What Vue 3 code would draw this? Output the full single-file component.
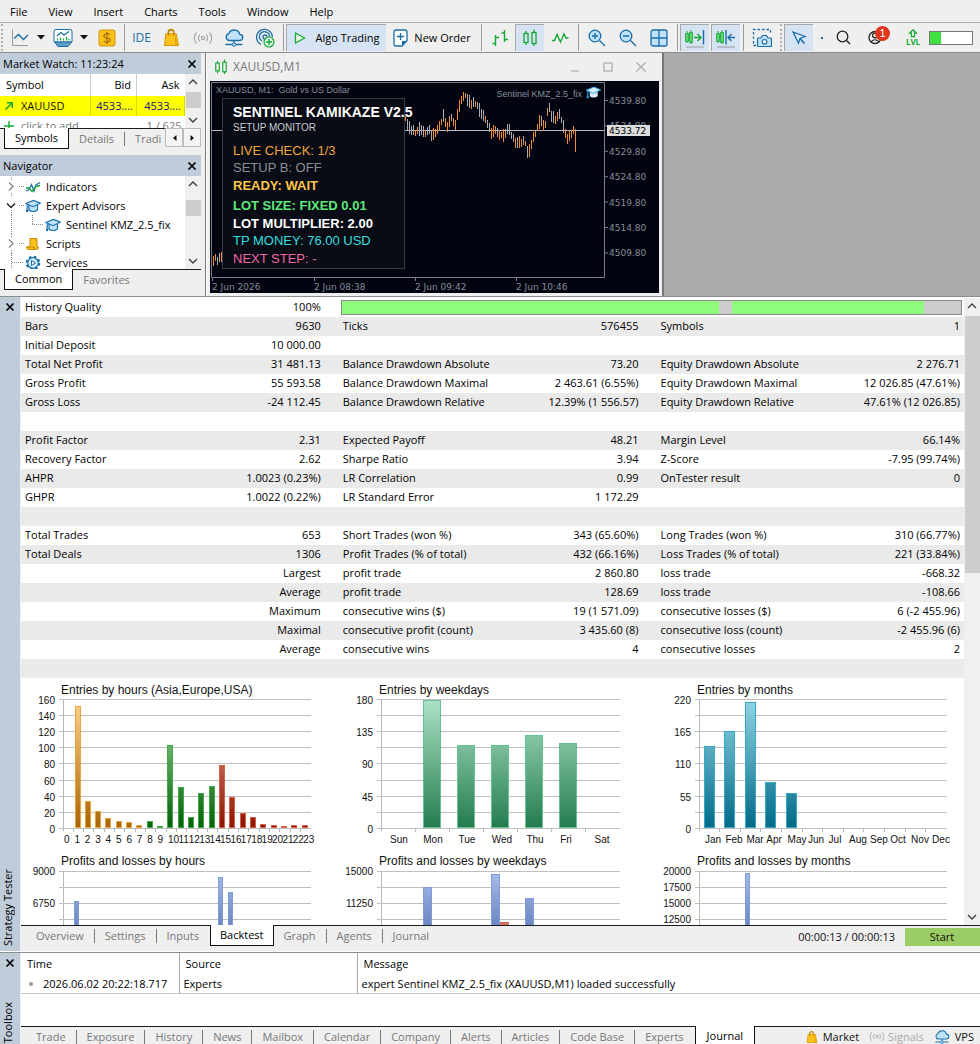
<script setup>
const menus = ['File', 'View', 'Insert', 'Charts', 'Tools', 'Window', 'Help']

const prices = ['4539.80', '4534.80', '4529.80', '4524.80', '4519.80', '4514.80', '4509.80']
const times = [
  { x: 2, t: '2 Jun 2026' },
  { x: 104, t: '2 Jun 08:38' },
  { x: 205, t: '2 Jun 09:42' },
  { x: 306, t: '2 Jun 10:46' }
]
const symbolTitle = 'XAUUSD, M1:\u00a0 Gold vs US Dollar'

const monitor = [
  { t: 'LIVE CHECK: 1/3', y: 74, c: 'amber' },
  { t: 'SETUP B: OFF', y: 91, c: 'dim' },
  { t: 'READY: WAIT', y: 109, c: 'gold strong' },
  { t: 'LOT SIZE: FIXED 0.01', y: 129, c: 'lime strong' },
  { t: 'LOT MULTIPLIER: 2.00', y: 147, c: 'white strong' },
  { t: 'TP MONEY: 76.00 USD', y: 164, c: 'cyan' },
  { t: 'NEXT STEP: -', y: 182, c: 'pink' }
]

const track = [
  [195, 38], [199, 47], [206, 53], [210, 46], [214, 53], [218, 50], [222, 54], [230, 46],
  [233, 34], [237, 46], [241, 37], [244, 46], [247, 33], [251, 19], [255, 15], [260, 23],
  [264, 22], [270, 30], [275, 38], [280, 52], [285, 48], [289, 56], [293, 54], [298, 47],
  [302, 58], [310, 63], [314, 60], [318, 73], [323, 57], [328, 46], [330, 36], [334, 48],
  [338, 27], [341, 34], [346, 39], [348, 33], [354, 47], [357, 58], [361, 54], [364, 50]
]
function level(x) {
  for (let i = 1; i < track.length; i++) {
    if (x <= track[i][0]) {
      const [x0, y0] = track[i - 1]
      const [x1, y1] = track[i]
      return y0 + ((y1 - y0) * (x - x0)) / (x1 - x0)
    }
  }
  return track[track.length - 1][1]
}
const candles = []
for (let x = 195, i = 0; x <= 363; x += 2, i++) {
  const y = level(x)
  const up = 3 + ((i * 7) % 5)
  const down = 2 + ((i * 11) % 6)
  const rising = level(x + 2) < y
  candles.push({ x, y: Math.round(y - up), h: up + down, c: rising || i % 5 === 0 ? 'up' : 'down' })
}
candles.push({ x: 365, y: 48, h: 23, c: 'up' })
candles.push({ x: 3, y: 175, h: 10, c: 'up' }, { x: 5, y: 173, h: 7, c: 'up' }, { x: 7, y: 176, h: 8, c: 'down' }, { x: 9, y: 172, h: 9, c: 'down' }, { x: 11, y: 171, h: 10, c: 'up' })

const rows = [
  ['Bars', '9630', 'Ticks', '576455', 'Symbols', '1'],
  ['Initial Deposit', '10 000.00', '', '', '', ''],
  ['Total Net Profit', '31 481.13', 'Balance Drawdown Absolute', '73.20', 'Equity Drawdown Absolute', '2 276.71'],
  ['Gross Profit', '55 593.58', 'Balance Drawdown Maximal', '2 463.61 (6.55%)', 'Equity Drawdown Maximal', '12 026.85 (47.61%)'],
  ['Gross Loss', '-24 112.45', 'Balance Drawdown Relative', '12.39% (1 556.57)', 'Equity Drawdown Relative', '47.61% (12 026.85)'],
  ['', '', '', '', '', ''],
  ['Profit Factor', '2.31', 'Expected Payoff', '48.21', 'Margin Level', '66.14%'],
  ['Recovery Factor', '2.62', 'Sharpe Ratio', '3.94', 'Z-Score', '-7.95 (99.74%)'],
  ['AHPR', '1.0023 (0.23%)', 'LR Correlation', '0.99', 'OnTester result', '0'],
  ['GHPR', '1.0022 (0.22%)', 'LR Standard Error', '1 172.29', '', ''],
  ['', '', '', '', '', ''],
  ['Total Trades', '653', 'Short Trades (won %)', '343 (65.60%)', 'Long Trades (won %)', '310 (66.77%)'],
  ['Total Deals', '1306', 'Profit Trades (% of total)', '432 (66.16%)', 'Loss Trades (% of total)', '221 (33.84%)'],
  ['', 'Largest', 'profit trade', '2 860.80', 'loss trade', '-668.32'],
  ['', 'Average', 'profit trade', '128.69', 'loss trade', '-108.66'],
  ['', 'Maximum', 'consecutive wins ($)', '19 (1 571.09)', 'consecutive losses ($)', '6 (-2 455.96)'],
  ['', 'Maximal', 'consecutive profit (count)', '3 435.60 (8)', 'consecutive loss (count)', '-2 455.96 (6)'],
  ['', 'Average', 'consecutive wins', '4', 'consecutive losses', '2'],
  ['', '', '', '', '', '']
]

const hours = [0, 151, 33, 20, 11, 7, 6, 3, 7, 1, 102, 50, 13, 42, 51, 77, 37, 17, 13, 4, 3, 1, 2, 2]
const charts = [
  {
    title: 'Entries by hours (Asia,Europe,USA)',
    title2: 'Profits and losses by hours',
    axis: 42, right: 290, step: 10.33, n: 24,
    y: [160, 140, 120, 100, 80, 60, 40, 20, 0],
    bars: hours.map((v, h) => ({ x: 54 + (h - 1) * 10.33, w: 5, h: (v * 128) / 160, g: h < 8 ? 'orange' : h < 15 ? 'green' : 'red' })).filter(b => b.h > 0),
    labels: hours.map((v, h) => ({ x: 43 + h * 10.4, t: h })),
    anchor: 'start',
    y2: ['9000', '', '6750', ''],
    bars2: [{ x: 53, y: 223, w: 4, g: 'blue' }, { x: 197, y: 199, w: 4, g: 'blue' }, { x: 207, y: 214, w: 4, g: 'blue' }]
  },
  {
    title: 'Entries by weekdays',
    title2: 'Profits and losses by weekdays',
    axis: 42, right: 281, step: 34.1, n: 7,
    y: [180, '', 135, '', 90, '', 45, '', 0],
    bars: [178, 116, 115, 129, 118].map((v, i) => ({ x: 84 + i * 34.1, w: 17, h: (v * 128) / 180, g: 'mint' })),
    labels: [['Sun', 60], ['Mon', 94], ['Tue', 128], ['Wed', 163], ['Thu', 196], ['Fri', 227], ['Sat', 263]].map(([t, x]) => ({ t, x })),
    anchor: 'middle',
    y2: ['15000', '', '11250', ''],
    bars2: [{ x: 84, y: 209, w: 8, g: 'blue' }, { x: 152, y: 196, w: 8, g: 'blue' }, { x: 161, y: 244, w: 8, g: 'brick' }, { x: 186, y: 220, w: 8, g: 'blue' }]
  },
  {
    title: 'Entries by months',
    title2: 'Profits and losses by months',
    axis: 42, right: 290, step: 20.6, n: 12,
    y: [220, '', 165, '', 110, '', 55, '', 0],
    bars: [140, 165, 215, 77, 59].map((v, i) => ({ x: 47 + i * 20.6, w: 10, h: (v * 128) / 220, g: 'teal' })),
    labels: [['Jan', 56], ['Feb', 77], ['Mar', 98], ['Apr', 117], ['May', 140], ['Jun', 159], ['Jul', 178], ['Aug', 201], ['Sep', 222], ['Oct', 241], ['Nov', 263], ['Dec', 284]].map(([t, x]) => ({ t, x })),
    anchor: 'middle',
    y2: ['20000', '17500', '15000', '12500'],
    bars2: [{ x: 88, y: 195, w: 4, g: 'blue' }]
  }
]

const gradients = [
  ['orange', '#ffd28e', '#a86400', 22, 150],
  ['green', '#9edc9e', '#046008', 22, 150],
  ['red', '#f0a898', '#8a1400', 22, 150],
  ['mint', '#abe2c6', '#247c4e', 22, 150],
  ['teal', '#93d3e3', '#006a88', 22, 150],
  ['blue', '#a9bdea', '#5d79b8', 193, 260],
  ['brick', '#e08070', '#c05040', 240, 260]
]
const edge = { orange: '#e8a640', green: '#3fa848', red: '#d8604a', mint: '#66c494', teal: '#35a8c4', blue: '#7f9bdc', brick: '#d06a58' }

const testerTabs = ['Overview', 'Settings', 'Inputs', 'Backtest', 'Graph', 'Agents', 'Journal']
const toolboxTabs = ['Trade', 'Exposure', 'History', 'News', 'Mailbox', 'Calendar', 'Company', 'Alerts', 'Articles', 'Code Base', 'Experts', 'Journal']
</script>

<template>
  <div class="terminal">
    <svg class="defs" aria-hidden="true">
      <symbol id="i-bag" viewBox="0 0 18 20">
        <path d="M5.5 8V4.5A3 3 0 0 1 11.500 4.500V8" fill="none" stroke="#c88a00" stroke-width="1.300" />
        <path d="M3 6h11l2.500 12.500h-15z" fill="#fcc21b" stroke="#d49400" />
        <path d="M13 6.500l2.500 12h-3z" fill="#e8a400" />
        <path d="M6 8.500V5a2.700 2.700 0 0 1 5.400 0v3.500" fill="none" stroke="#b87a00" />
      </symbol>
      <symbol id="i-cloud" viewBox="0 0 20 18">
        <path d="M5 11.500h10.500a3 3 0 0 0 .3-6.200 5.800 5.800 0 0 0-11-.6A3.500 3.500 0 0 0 5 11.500z" fill="#bfe3fa" stroke="#1a6ea8" stroke-width="1.300" />
        <path d="M10 11.500v3M1.500 15.500h6.500M12 15.500h6.500" stroke="#1a6ea8" stroke-width="1.300" />
        <circle cx="10" cy="15.500" r="1.800" fill="#bfe3fa" stroke="#1a6ea8" />
      </symbol>
      <symbol id="i-signal" viewBox="0 0 20 14">
        <g fill="none" stroke="#a8a8a8" stroke-width="1.200">
          <circle cx="10" cy="7" r="1.600" />
          <path d="M6.800 3.800a4.500 4.500 0 0 0 0 6.400M13.200 3.800a4.500 4.500 0 0 1 0 6.400M3.500 1.500a8 8 0 0 0 0 11M16.500 1.500a8 8 0 0 1 0 11" />
        </g>
      </symbol>
      <symbol id="i-cap" viewBox="0 0 16 14">
        <path d="M4 6v5c2 2 6 2 8.500 0V6" fill="#bfe3fa" stroke="#1a6ea8" stroke-width="1.200" />
        <path d="M.8 4.500L8.500 1.500l6.800 2.700-7.300 3.500z" fill="#bfe3fa" stroke="#1a6ea8" stroke-width="1.200" />
        <path d="M2.200 5.500v6.500" stroke="#1a6ea8" stroke-width="1.200" />
        <circle cx="2.200" cy="12" r="1.200" fill="#1a6ea8" />
      </symbol>
      <symbol id="i-close" viewBox="0 0 10 10">
        <path d="M1.500 1.500l7 7M8.500 1.500l-7 7" stroke="currentColor" stroke-width="1.700" />
      </symbol>
      <symbol id="i-up" viewBox="0 0 10 6"><path d="M1 5l4-4 4 4" fill="none" stroke="#404040" stroke-width="1.400" /></symbol>
      <symbol id="i-down" viewBox="0 0 10 6"><path d="M1 1l4 4 4-4" fill="none" stroke="#404040" stroke-width="1.400" /></symbol>
      <symbol id="i-candle" viewBox="0 0 16 18">
        <g fill="none" stroke="#14a832" stroke-width="1.300">
          <path d="M4 2v2.500M4 13.500V16M12 .5v3M12 14.500V17" /><rect x="2" y="4.500" width="4" height="9" /><rect x="10" y="3.500" width="4" height="11" />
        </g>
      </symbol>
    </svg>

    <nav class="menubar" aria-label="Main menu">
      <button v-for="m in menus" :key="m" type="button">{{ m }}</button>
    </nav>

    <div class="toolbar">
      <i class="grip"></i>
      <button class="drop" type="button" aria-label="Chart type">
        <svg width="20" height="20"><path d="M2.500 1.500V17.500H18" fill="none" stroke="#9a9a9a" /><path d="M4 10.500l4.500-4 5 5L18 7" fill="none" stroke="#1a6ea8" stroke-width="1.400" /></svg>
        <svg width="8" height="5"><path d="M0 0h8L4 4.500z" fill="#111" /></svg>
      </button>
      <button class="drop" type="button" aria-label="Indicators">
        <svg width="20" height="20"><path d="M3 1.500h14q2 0 2 2v10.500H1V3.500q0-2 2-2z" fill="#fff" stroke="#1a6ea8" /><path d="M1.500 14h17l-3.500 4.500H5z" fill="#5f9fc4" stroke="#1a6ea8" /><path d="M4 8l4-3.500 3 2.500 5-3.500" fill="none" stroke="#1a6ea8" stroke-width="1.200" /><path d="M4.500 12.500v-2M7.500 12.500v-3M10.500 12.500v-2M13.500 12.500v-3.500M16 12.500v-2" stroke="#14a832" stroke-width="1.200" /></svg>
        <svg width="8" height="5"><path d="M0 0h8L4 4.500z" fill="#111" /></svg>
      </button>
      <button class="coin" type="button" aria-label="Quotes">
        <svg width="18" height="18"><rect x="1" y="1" width="16" height="16" rx="2" fill="#fcc21b" stroke="#d49400" /><path d="M12 6q-1-1.500-3-1.500T6 6.500t3 2.500 3 2.500T9 13.500 5.800 12M9 3v12" fill="none" stroke="#9a6400" stroke-width="1.200" /></svg>
      </button>
      <i class="sep"></i>
      <button class="ide" type="button">IDE</button>
      <button type="button" aria-label="Market"><svg width="17" height="19"><use href="#i-bag" /></svg></button>
      <button type="button" aria-label="Signals"><svg width="20" height="14"><use href="#i-signal" /></svg></button>
      <button type="button" aria-label="Cloud"><svg width="20" height="18"><use href="#i-cloud" /></svg></button>
      <button type="button" aria-label="VPS">
        <svg width="20" height="20"><g fill="none" stroke="#1a6ea8" stroke-width="1.300"><path d="M6 16.500A8 8 0 1 1 17.500 9M7 13a5 5 0 1 1 7.500-4" /><circle cx="10" cy="9" r="2" /></g><circle cx="14" cy="14" r="5" fill="#e2f7e4" stroke="#14a832" stroke-width="1.200" /><path d="M14 11v6M11 14h6" stroke="#14a832" stroke-width="1.400" /></svg>
      </button>
      <i class="sep"></i>
      <button class="wide on" type="button"><svg width="14" height="14"><path d="M2.500 2l9 5-9 5z" fill="#e8fbe8" stroke="#14a832" stroke-width="1.300" /></svg>Algo Trading</button>
      <button class="wide order" type="button"><svg width="15" height="18"><path d="M3 1h9q2 0 2 2v8.500L9 17H3q-2 0-2-2V3q0-2 2-2z" fill="#fff" stroke="#1a6ea8" stroke-width="1.300" /><path d="M9 17v-5h5z" fill="#1a6ea8" /><path d="M7.500 4v7M4 7.500h7" stroke="#1a6ea8" stroke-width="1.300" /></svg>New Order</button>
      <i class="sep"></i>
      <button type="button" aria-label="Bar chart"><svg width="18" height="18"><path d="M4.500 6v11M1.500 14.500h3M4.500 8.500H8M13.500 1v12M10.500 4h3M13.500 10.500H17" fill="none" stroke="#14a832" stroke-width="1.400" /></svg></button>
      <button class="on" type="button" aria-label="Candlesticks"><svg width="16" height="18"><use href="#i-candle" /></svg></button>
      <button type="button" aria-label="Line chart"><svg width="18" height="14"><path d="M1 9.500h2.500L6 3.500l3.500 7.500L13 3l2 4h2.500" fill="none" stroke="#14a832" stroke-width="1.400" /></svg></button>
      <i class="sep"></i>
      <button type="button" aria-label="Zoom in"><svg width="18" height="18"><circle cx="7" cy="7" r="5.800" fill="#bfe3fa" stroke="#1a6ea8" stroke-width="1.300" /><path d="M11.500 11.500l5.500 5.500M4 7h6M7 4v6" stroke="#1a6ea8" stroke-width="1.400" /></svg></button>
      <button type="button" aria-label="Zoom out"><svg width="18" height="18"><circle cx="7" cy="7" r="5.800" fill="#bfe3fa" stroke="#1a6ea8" stroke-width="1.300" /><path d="M11.500 11.500l5.500 5.500M4 7h6" stroke="#1a6ea8" stroke-width="1.400" /></svg></button>
      <button type="button" aria-label="Tile windows"><svg width="18" height="18"><rect x="1" y="1" width="16" height="16" rx="2" fill="#bfe3fa" stroke="#1a6ea8" stroke-width="1.300" /><path d="M9 1v16M1 9h16" stroke="#1a6ea8" stroke-width="1.300" /></svg></button>
      <i class="sep"></i>
      <button class="on" type="button" aria-label="Auto scroll"><svg width="22" height="20"><path d="M3 3v12M7 2v14" stroke="#14a832" /><path d="M1.500 5.500h3v8h-3zM5.500 4.500h3v10h-3z" fill="#5fd070" stroke="#14a832" stroke-width=".8" /><path d="M10 9.500h6.500M13.500 6l3.500 3.500-3.500 3.500" fill="none" stroke="#14a832" stroke-width="1.400" /><path d="M19.500 2v14.500" stroke="#1a6ea8" stroke-width="1.400" /><path d="M2 19h18" stroke="#999" /></svg></button>
      <button class="on gap" type="button" aria-label="Chart shift"><svg width="22" height="20"><path d="M3 3v12M7 2v14" stroke="#14a832" /><path d="M1.500 5.500h3v8h-3zM5.500 4.500h3v10h-3z" fill="#5fd070" stroke="#14a832" stroke-width=".8" /><path d="M11 2v14.500M20 9.500h-6.500M16.500 6L13 9.500l3.500 3.500" fill="none" stroke="#1a6ea8" stroke-width="1.400" /><path d="M2 19h18" stroke="#999" /></svg></button>
      <i class="sep"></i>
      <button type="button" aria-label="Screenshot"><svg width="20" height="20"><path d="M4 17.500H1.500V1.500H18.500V6" fill="none" stroke="#1a6ea8" stroke-width="1.300" stroke-dasharray="2.500 2" /><path d="M6 10h3l1.500-2.500h4L16 10h2.500q1 0 1 1v6.500q0 1-1 1H6.500q-1 0-1-1V11q0-1 1-1z" fill="#bfe3fa" stroke="#1a6ea8" stroke-width="1.200" /><circle cx="12.500" cy="13.800" r="2.300" fill="#fff" stroke="#1a6ea8" stroke-width="1.200" /></svg></button>
      <i class="grip mid"></i>
      <button class="on" type="button" aria-label="Cursor"><svg width="16" height="16"><path d="M2 2l12 4.500-5 2L7.500 13z" fill="#d7efff" stroke="#1a6ea8" stroke-width="1.300" /><path d="M9 8.500l4.500 5" stroke="#1a6ea8" stroke-width="1.600" /></svg></button>
      <i class="bit"></i>
      <button class="find" type="button" aria-label="Search"><svg width="15" height="15"><circle cx="6.500" cy="6.500" r="5.300" fill="none" stroke="#222" stroke-width="1.300" /><path d="M10.500 10.500l3.500 3.500" stroke="#222" stroke-width="1.400" /></svg></button>
      <button class="user" type="button" aria-label="Account">
        <svg width="15" height="15"><circle cx="7" cy="7.500" r="6" fill="none" stroke="#222" stroke-width="1.300" /><circle cx="7" cy="5.500" r="2.400" fill="none" stroke="#222" stroke-width="1.200" /><path d="M3 12q4-4.500 8 0" fill="none" stroke="#222" stroke-width="1.200" /></svg>
        <b>1</b>
      </button>
      <span class="lvl"><svg width="10" height="9"><path d="M5 .8l3.500 3.400H6.500v3.500h-3V4.200h-2z" fill="none" stroke="#14a832" stroke-width="1.200" /></svg>LVL</span>
      <span class="battery"><i></i></span>
    </div>

    <div class="workspace">
      <aside class="side">
        <section class="market">
          <h2>Market Watch: 11:23:24<button type="button" aria-label="Close Market Watch"><svg width="10" height="10"><use href="#i-close" /></svg></button></h2>
          <div class="scroller quotes">
            <table>
              <thead><tr><th>Symbol</th><th>Bid</th><th>Ask</th></tr></thead>
              <tbody>
                <tr class="hot"><td><svg width="10" height="10"><path d="M1.500 8.500l6-6M3 1.800h5.200V7" fill="none" stroke="#14a832" stroke-width="1.500" /></svg>XAUUSD</td><td>4533....</td><td>4533....</td></tr>
                <tr class="add"><td><svg width="10" height="10"><path d="M5 0v10M0 5h10" stroke="#14a832" stroke-width="1.400" /></svg>click to add</td><td colspan="2">1 / 625</td></tr>
              </tbody>
            </table>
            <div class="bar"><svg width="10" height="6"><use href="#i-up" /></svg><i></i><svg width="10" height="6"><use href="#i-down" /></svg></div>
          </div>
          <div class="tabs first">
            <button class="active" type="button">Symbols</button><button type="button">Details</button><button class="cut" type="button">Tradi</button>
            <span class="spin"><button type="button" aria-label="Previous tab"><svg width="5" height="6"><path d="M4.500 0v6L1 3z" fill="#111" /></svg></button><button type="button" aria-label="Next tab"><svg width="5" height="6"><path d="M.5 0v6L4 3z" fill="#111" /></svg></button></span>
          </div>
        </section>
        <section class="navigator">
          <h2>Navigator<button type="button" aria-label="Close Navigator"><svg width="10" height="10"><use href="#i-close" /></svg></button></h2>
          <div class="scroller">
            <ul>
              <li><svg class="twig" width="24" height="19"><path d="M11.500 0v3M11.500 16v3M19 9.500h5" stroke="#888" stroke-dasharray="1 1" /><path d="M9 5.500l4 4-4 4" fill="none" stroke="#888" stroke-width="1.300" /></svg><svg width="16" height="14"><path d="M1 11l3-1.500 2.500-5L9 11l2-6 4-2.500" fill="none" stroke="#1a6ea8" stroke-width="1.300" /><path d="M1 8h3l3 3.500 4-5 4-1" fill="none" stroke="#14a832" stroke-width="1.300" /></svg>Indicators</li>
              <li><svg class="twig" width="24" height="19"><path d="M11.500 14v5M19 9.500h5" stroke="#888" stroke-dasharray="1 1" /><path d="M7 7.500l4 4 4-4" fill="none" stroke="#222" stroke-width="1.500" /></svg><svg width="16" height="14"><use href="#i-cap" /></svg>Expert Advisors</li>
              <li><svg class="twig" width="44" height="19"><path d="M11.500 0v19M32.500 0v9.500M32 9.500h12" fill="none" stroke="#888" stroke-dasharray="1 1" /></svg><svg width="16" height="14"><use href="#i-cap" /></svg>Sentinel KMZ_2.5_fix</li>
              <li><svg class="twig" width="24" height="19"><path d="M11.500 0v3M11.500 16v3M19 9.500h5" stroke="#888" stroke-dasharray="1 1" /><path d="M9 5.500l4 4-4 4" fill="none" stroke="#888" stroke-width="1.300" /></svg><svg width="16" height="14"><path d="M5 1.500h7V10h1.500q0 2.500-2 2.500H3.500q-2 0-2-2.500H5z" fill="#fcc21b" stroke="#c88a00" /><path d="M1.500 10h7.500q0 2.500 2 2.500" fill="none" stroke="#c88a00" /></svg>Scripts</li>
              <li><svg class="twig" width="24" height="19"><path d="M11.500 0v19M12 9.500h12" fill="none" stroke="#888" stroke-dasharray="1 1" /></svg><svg width="16" height="16"><circle cx="8" cy="8" r="6.300" fill="none" stroke="#1a6ea8" stroke-width="2" stroke-dasharray="2.600 2.350" /><circle cx="8" cy="8" r="5.300" fill="#d7efff" stroke="#1a6ea8" stroke-width="1.200" /><path d="M6.500 5.500v5l4-2.500z" fill="#fff" stroke="#1a6ea8" /></svg>Services</li>
            </ul>
            <div class="bar"><svg width="10" height="6"><use href="#i-up" /></svg><i></i><svg width="10" height="6"><use href="#i-down" /></svg></div>
          </div>
          <div class="tabs first"><button class="active" type="button">Common</button><button type="button">Favorites</button></div>
        </section>
      </aside>

      <section class="chartwin">
        <header>
          <svg width="14" height="16"><use href="#i-candle" /></svg><span>XAUUSD,M1</span>
          <button type="button" aria-label="Minimize"><svg width="10" height="10"><path d="M1 9h8" stroke="#aaa" stroke-width="1.200" /></svg></button>
          <button type="button" aria-label="Maximize"><svg width="10" height="10"><rect x="1" y="1" width="8" height="8" fill="none" stroke="#aaa" stroke-width="1.200" /></svg></button>
          <button type="button" aria-label="Close chart"><svg width="10" height="10"><path d="M.5 .5l9 9M9.500 .5l-9 9" stroke="#aaa" stroke-width="1.200" /></svg></button>
        </header>
        <svg class="canvas" width="449" height="212" role="img" aria-label="XAUUSD M1 price chart">
          <rect width="449" height="212" fill="#02050f" />
          <path d="M1.500 196V1.500H394.500V196.500H1.500" fill="none" stroke="#77808f" />
          <path d="M2 49.500H394" stroke="#b9bcc6" />
          <rect v-for="(c, i) in candles" :key="i" :x="c.x" :y="c.y" width="1" :height="c.h" :class="c.c" />
          <g class="axis">
            <g v-for="(p, i) in prices" :key="p"><path :d="`M395 ${19.5 + i * 25.4}h3`" stroke="#77808f" /><text x="399" :y="23 + i * 25.4">{{ p }}</text></g>
            <g v-for="t in times" :key="t.x"><path :d="`M${t.x + .5} 197v3`" stroke="#77808f" /><text :x="t.x" y="209">{{ t.t }}</text></g>
            <text class="name" x="6" y="12">{{ symbolTitle }}</text>
            <text class="name end" x="372" y="16">Sentinel KMZ_2.5_fix</text>
          </g>
          <rect x="397" y="44" width="43" height="11" fill="#dcdcdc" /><text class="last" x="399" y="53">4533.72</text>
          <svg x="376" y="5" width="15" height="13" viewBox="0 0 16 14"><path d="M4 6v5c2 2 6 2 8.500 0V6z" fill="#d5efff" /><path d="M0 4.500L8.500 1l7.300 3.200L8 8z" fill="#d5efff" stroke="#2f9be0" /><path d="M1.800 5v7" stroke="#2f9be0" stroke-width="1.300" /><circle cx="1.800" cy="12" r="1.300" fill="#2f9be0" /></svg>
          <rect x="12.500" y="17.500" width="182" height="170" fill="#090c14" stroke="#343944" />
          <g class="monitor">
            <text class="head" x="23" y="36">SENTINEL KAMIKAZE V2.5</text>
            <text class="sub" x="23" y="50">SETUP MONITOR</text>
            <text v-for="m in monitor" :key="m.t" x="23" :y="m.y" :class="m.c">{{ m.t }}</text>
          </g>
        </svg>
      </section>
    </div>

    <section class="tester">
      <div class="strip"><button type="button" aria-label="Close Strategy Tester"><svg width="10" height="10"><use href="#i-close" /></svg></button><span>Strategy Tester</span></div>
      <div class="pane">
        <div class="scroller report">
          <div class="content">
            <table>
              <colgroup><col class="l" /><col class="v" /><col class="l" /><col class="v" /><col class="l" /><col class="v last-col" /></colgroup>
              <tbody>
                <tr><th>History Quality</th><td>100%</td><td class="quality" colspan="4"><div><i class="g1"></i><i class="g2"></i><i class="g3"></i></div></td></tr>
                <tr v-for="(r, i) in rows" :key="i">
                  <template v-for="(c, j) in r" :key="j"><th v-if="j % 2 === 0">{{ c }}</th><td v-else>{{ c }}</td></template>
                </tr>
              </tbody>
            </table>
            <div class="charts">
              <svg v-for="(c, k) in charts" :key="k" width="306" height="260" role="img" :aria-label="c.title">
                <defs>
                  <linearGradient v-for="g in gradients" :id="`${g[0]}${k}`" :key="g[0]" gradientUnits="userSpaceOnUse" x1="0" x2="0" :y1="g[3]" :y2="g[4]">
                    <stop offset="0" :stop-color="g[1]" /><stop offset="1" :stop-color="g[2]" />
                  </linearGradient>
                </defs>
                <text class="title" x="40" y="16">{{ c.title }}</text>
                <g v-for="(v, i) in c.y" :key="i">
                  <path :d="`M${c.axis - 4} ${Math.round(i * 16.1) + 21}H${c.right}`" stroke="#c0c0c0" />
                  <text class="num" :x="c.axis - 8" :y="Math.round(i * 16.1) + 26">{{ v }}</text>
                </g>
                <path :d="`M${c.axis} 22V153M${c.axis} 193V260`" stroke="#b8b8b8" />
                <path v-for="i in c.n - 1" :key="i" :d="`M${c.axis + i * c.step} 150v4`" stroke="#b8b8b8" />
                <rect v-for="(b, i) in c.bars" :key="i" :x="b.x" :y="149.500 - b.h" :width="b.w" :height="b.h" :fill="`url(#${b.g}${k})`" :stroke="edge[b.g]" />
                <text v-for="l in c.labels" :key="l.t" :x="l.x" y="165" :text-anchor="c.anchor">{{ l.t }}</text>
                <text class="title" x="40" y="187">{{ c.title2 }}</text>
                <g v-for="(v, i) in c.y2" :key="i">
                  <path :d="`M${c.axis - 4} ${i * 16 + 193}H${c.right}`" stroke="#c0c0c0" />
                  <text class="num" :x="c.axis - 8" :y="i * 16 + 197">{{ v }}</text>
                </g>
                <rect v-for="(b, i) in c.bars2" :key="i" :x="b.x" :y="b.y" :width="b.w" height="70" :fill="`url(#${b.g}${k})`" :stroke="edge[b.g]" />
              </svg>
            </div>
          </div>
          <div class="bar"><svg width="10" height="6"><use href="#i-up" /></svg><i></i><svg width="10" height="6"><use href="#i-down" /></svg></div>
        </div>
        <div class="tabs">
          <button v-for="t in testerTabs" :key="t" type="button" :class="{ active: t === 'Backtest' }">{{ t }}</button>
          <span class="clock">00:00:13 / 00:00:13</span>
          <button class="start" type="button">Start</button>
        </div>
      </div>
    </section>

    <section class="toolbox">
      <div class="strip"><button type="button" aria-label="Close Toolbox"><svg width="10" height="10"><use href="#i-close" /></svg></button><span>Toolbox</span></div>
      <div class="pane">
        <table>
          <thead><tr><th>Time</th><th>Source</th><th>Message</th></tr></thead>
          <tbody><tr><td><i></i>2026.06.02 20:22:18.717</td><td>Experts</td><td>expert Sentinel KMZ_2.5_fix (XAUUSD,M1) loaded successfully</td></tr></tbody>
        </table>
        <div class="tabs">
          <button v-for="t in toolboxTabs" :key="t" type="button" :class="{ active: t === 'Journal' }">{{ t }}</button>
          <span class="links">
            <a href="#market"><svg width="12" height="14"><use href="#i-bag" /></svg>Market</a>
            <a class="off" href="#signals"><svg width="16" height="11"><use href="#i-signal" /></svg>Signals</a>
            <a href="#vps"><svg width="16" height="14"><use href="#i-cloud" /></svg>VPS</a>
          </span>
        </div>
      </div>
    </section>
  </div>
</template>

<style>
html, body, #app { height: 100%; }
</style>

<style scoped>
.terminal { display: flex; flex-direction: column; height: 100%; overflow: hidden; background: #efefef; color: #000; font: 11px/18px "Open Sans", "Noto Sans", sans-serif; }
.terminal * { box-sizing: border-box; }
.defs { position: absolute; width: 0; height: 0; }
button { border: 0; padding: 0; margin: 0; background: none; font: inherit; color: inherit; display: inline-flex; align-items: center; justify-content: center; }
svg { flex: none; display: block; }
h2 { margin: 0; font: inherit; }
table { border-collapse: collapse; border-spacing: 0; }
th { font-weight: normal; text-align: left; padding: 0; }
td { padding: 0; }

.menubar { display: flex; gap: 21px; height: 23px; padding: 1px 10px 0; flex: none; border-bottom: 1px solid #b0b0b0; }
.toolbar { display: flex; height: 30px; flex: none; padding: 1px 0; border-bottom: 1px solid #8c8c8c; background: #efefef; }
.toolbar button { width: 31px; flex: none; }
.toolbar .drop { width: 43px; gap: 7px; }
.toolbar .coin, .toolbar .ide { width: 29px; }
.toolbar .ide { color: #1a6ea8; font-size: 12px; }
.toolbar .on { width: 29px; background: #d5e3f2; border-left: 1px solid #a8a8a8; border-top: 1px solid #a8a8a8; }
.toolbar .gap { margin-left: 2px; }
.toolbar .wide { width: 100px; gap: 8px; white-space: nowrap; }
.toolbar .order { width: 92px; gap: 6px; }
.sep { width: 6px; flex: none; border-left: 3px solid #efefef; background: linear-gradient(90deg, #999 1px, transparent 1px); }
.grip { width: 6px; flex: none; border-left: 2px dotted #b0b0b0; margin-left: 1px; margin-right: -1px; }
.grip.mid { margin-left: 3px; margin-right: -2px; }
.bit { width: 2px; height: 2px; margin: 0 8px; align-self: center; flex: none; background: #1a6ea8; }
.toolbar .find { width: 25px; }
.toolbar .user { width: 36px; position: relative; margin-left: 2px; justify-content: flex-start; padding-left: 10px; }
.user b { position: absolute; left: 17px; top: 2px; width: 15px; height: 15px; border-radius: 8px; background: #e0361c; color: #fff; font: 11px/15px "Liberation Sans", sans-serif; text-align: center; }
.lvl { width: 38px; flex: none; display: flex; flex-direction: column; align-items: center; justify-content: center; color: #14a832; font: bold 8px/8px "Open Sans", sans-serif; }
.battery { width: 44px; height: 14px; align-self: center; flex: none; border: 1px solid #777; background: #fff; margin-left: -3px; }
.battery i { display: block; width: 25%; height: 100%; background: #3fe03f; }

.workspace { display: flex; height: 243px; flex: none; background: #ababab; }
.side { width: 206px; flex: none; padding: 0 4px 6px 0; background: #efefef; border-right: 1px solid #777; display: flex; flex-direction: column; justify-content: space-between; }
.side section { display: flex; flex-direction: column; }
.side h2 { height: 21px; padding: 0 4px 0 3px; display: flex; align-items: center; justify-content: space-between; background: #bfcddb; }
.scroller { display: flex; overflow: hidden; background: #fff; min-height: 0; }
.bar { width: 16px; flex: none; display: flex; flex-direction: column; align-items: center; background: #f0f0f0; padding: 5px 0; }
.bar i { width: 15px; background: #cdcdcd; margin: 5px 0 auto; flex: none; }
.quotes { height: 54px; }
.quotes table { flex: 1; align-self: flex-start; table-layout: fixed; width: 185px; }
.quotes th { height: 22px; padding: 0 6px; border-right: 1px solid #ccc; }
.quotes th:nth-child(n+2) { width: 46px; text-align: right; padding-right: 5px; }
.quotes th:last-child { width: 48px; border: 0; }
.quotes td { height: 20px; white-space: nowrap; text-align: right; padding-right: 3px; }
.quotes td:first-child { text-align: left; padding: 0; }
.quotes td svg { display: inline-block; margin: 0 7px 0 4px; vertical-align: -1px; }
.hot { background: #ff0; color: #101080; }
.hot td:first-child { color: #111; }
.hot td { border-right: 1px solid #d8d800; }
.add { color: #777; }
.quotes .bar i { height: 16px; margin-top: 7px; }
.navigator .scroller { height: 93px; }
.navigator .bar i { height: 16px; margin-top: 13px; }
ul { margin: 0; padding: 1px 0 0; flex: 1; list-style: none; }
li { height: 19px; display: flex; align-items: center; gap: 5px; white-space: nowrap; }
.twig { margin-right: -4px; }

.tabs { display: flex; flex: none; height: 26px; background: linear-gradient(#1c1c1c, #1c1c1c) top / 100% 1px no-repeat #efefef; color: #777; white-space: nowrap; }
.tabs > button { padding: 0 11px 0 10px; height: 21px; position: relative; }
.tabs > button:not(.active, .start)::after { content: ""; position: absolute; right: 0; top: 4px; height: 14px; border-right: 1px solid #777; }
.tabs > button:has(+ .active)::after, .tabs > button:has(+ span)::after { display: none; }
.tabs > .active { background: #fff; color: #000; border: solid #111; border-width: 0 1px 1px; padding: 0 9px; }
.pane > .tabs { padding-left: 5px; }
.side .tabs { padding-left: 4px; height: 21px; }
.side .tabs > .active { padding: 0 10px; }
.market .tabs { height: 22px; }
.navigator .tabs > button::after { display: none; }
.cut { overflow: hidden; }
.tabs > button.cut { padding-right: 0; }
.spin { display: flex; margin-left: auto; align-self: flex-start; }
.spin button { width: 18px; height: 19px; border: 1px solid #bbb; background: #f4f4f4; }

.chartwin { width: 458px; padding: 0 5px 2px 3px; flex: none; background: #efefef; border-right: 2px solid #777; border-left: 1px solid #fff; }
.chartwin header { display: flex; height: 28px; align-items: center; padding: 0 11px 0 4px; color: #777; font-size: 12px; }
.chartwin header span { margin: 0 auto 0 5px; }
.chartwin header button { width: 10px; margin-left: 23px; }
.canvas { overflow: hidden; }
.axis text, .last { font: 9px "DejaVu Sans", sans-serif; fill: #858c99; }
.axis .name { font: 9px "Liberation Sans", sans-serif; }
.axis .end { text-anchor: end; }
.last { fill: #000; }
.up { fill: #f08c30; }
.down { fill: #a9abb0; }
.monitor text { font: 13px "Liberation Sans", sans-serif; }
.monitor .strong { font-weight: bold; }
.monitor .head { font: bold 14px "Liberation Sans", sans-serif; fill: #fff; }
.monitor .sub { font-size: 10px; fill: #c8ccd4; }
.amber { fill: #f0a53c; }
.dim { fill: #8a8d94; }
.gold { fill: #ffc64a; }
.lime { fill: #5fe87c; }
.white { fill: #fff; }
.cyan { fill: #35dfe0; }
.pink { fill: #f065a4; }

.tester { flex: 1; min-height: 0; display: flex; border-top: 1px solid #8c8c8c; border-bottom: 1px solid #fff; }
.strip { width: 21px; flex: none; display: flex; flex-direction: column; justify-content: space-between; align-items: center; background: #bfcddb; padding: 5px 0 5px; border-right: 1px solid #efefef; }
.strip span { writing-mode: vertical-rl; transform: rotate(180deg); line-height: 16px; margin-right: 4px; }
.pane { flex: 1; min-width: 0; display: flex; flex-direction: column; background: #efefef; }
.report { flex: 1; padding-top: 1px; }
.content { flex: 1; min-width: 0; }
.report .bar i { height: 257px; margin-top: 7px; }
.content table { width: 100%; table-layout: fixed; }
.content tr { height: 19px; }
.content tr:nth-child(even) { background: #eaeaea; }
.content th, .content td { white-space: nowrap; line-height: 18px; padding-bottom: 1px; }
.content th { padding-left: 4px; }
.content td { text-align: right; padding-right: 18px; }
.content td:last-child { padding-right: 4px; }
.l { width: 19%; }
.v { width: 14.7%; }
.v.last-col { width: 13.6%; }
.content .quality { padding: 0 2px; }
.content .quality:last-child { padding-right: 2px; }
.quality div { display: flex; height: 15px; border: 1px solid #888; background: #ccc; }
.g1 { width: 61%; background: #8ffc7e; }
.g2 { width: 2%; }
.g3 { width: 31%; background: #8ffc7e; }
.charts { display: grid; grid-template-columns: 33.7% 33.7% 1fr; }
.charts rect, .charts path { shape-rendering: crispEdges; }
.charts text { font: 10px "Liberation Sans", sans-serif; fill: #111; }
.charts .title { font-size: 12px; }
.charts .num { text-anchor: end; }
.clock { margin-left: auto; padding: 3px 10px 0 0; color: #111; }
.tabs > .start { width: 75px; height: 18px; margin: 3px 0 0; background: #9ccc65; color: #111; }

.toolbox { height: 92px; flex: none; display: flex; border-top: 1px solid #8c8c8c; overflow: hidden; }
.toolbox .pane { justify-content: space-between; background: #fff; }
.toolbox .strip { padding-bottom: 1px; }
.toolbox table { width: 100%; table-layout: fixed; border-bottom: 1px solid #c8c8c8; }
.toolbox th { height: 22px; padding-left: 6px; }
.toolbox td { height: 18px; padding-left: 4px; white-space: nowrap; }
.toolbox th:nth-child(1) { width: 158px; }
.toolbox th:nth-child(2) { width: 178px; }
.toolbox tr > :nth-child(n+2) { border-left: 1px solid #aaa; }
.toolbox td i { display: inline-block; width: 4px; height: 4px; border-radius: 2px; background: #999; margin: 0 10px 2px 8px; }
.toolbox td:first-child { padding-left: 0; }
.toolbox .tabs { height: 18px; overflow: hidden; }
.toolbox .tabs > .active { padding: 0 11px; }
.links { margin-left: auto; display: flex; gap: 10px; padding: 3px 6px 0 0; }
.links a { display: flex; align-items: center; gap: 5px; color: #111; text-decoration: none; }
.links .off { color: #aaa; gap: 3px; }
</style>
